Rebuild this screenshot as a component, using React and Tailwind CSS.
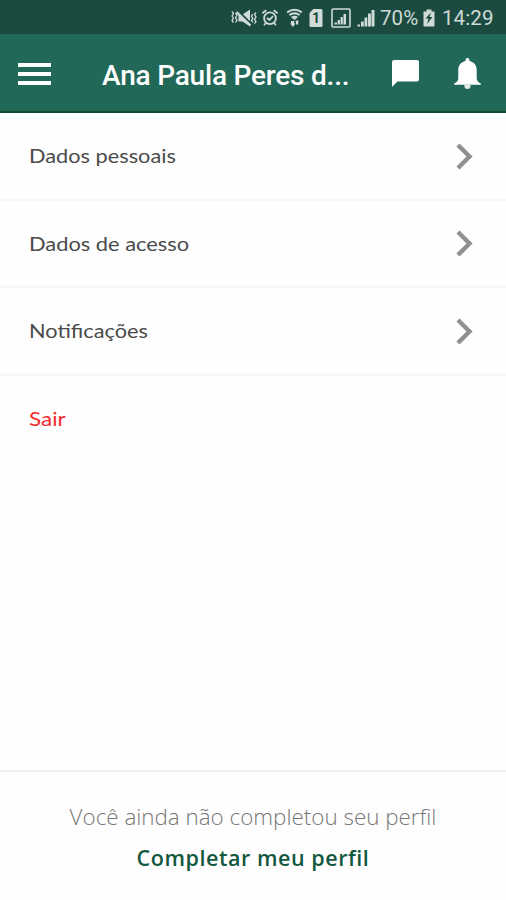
const menuItems = [
  { label: 'Dados pessoais', height: 'h-[88px]', stretch: 'scale-x-[1.145]' },
  { label: 'Dados de acesso', height: 'h-[87px]', stretch: 'scale-x-[1.15]' },
  { label: 'Notificações', height: 'h-[88px]', stretch: 'scale-x-[1.145]' },
  { label: 'Sair', height: 'h-[88px]', stretch: 'scale-x-[1.18]', danger: true },
];

function MuteVibrateIcon() {
  return (
    <svg width="26" height="20" viewBox="0 0 26 20" fill="none" stroke="currentColor">
      <path d="M1 3.500l1.500 2L1 8l1.500 2.200L1 12.500l1.500 2M4.500 5L6 7.300l-1.500 2.400L6 12l-1.500 2.500M25 4.500l-1.500 2L25 9l-1.500 2.500 1.500 2-1.500 2M21.800 6l-1.300 2 1.300 2.200-1.300 2.200 1.300 2" strokeWidth="1.300" />
      <path d="M7.500 6.500h4l7.500-5v17l-7.500-5h-4z" fill="currentColor" stroke="none" />
      <path d="M6.500 2.500L20 15.500" stroke="#1b4b40" strokeWidth="2" />
      <path d="M5.500 4L19.500 17.500" strokeWidth="2.200" />
    </svg>
  );
}

function AlarmIcon() {
  return (
    <svg width="18" height="20" viewBox="0 0 18 20" fill="none" stroke="currentColor" strokeWidth="1.800">
      <circle cx="9" cy="10.300" r="5.900" />
      <path d="M1.300 5.200l4-3M16.700 5.200l-4-3M4.800 15l-1.700 2.200M13.200 15l1.700 2.200" />
      <path d="M6 9.800l2.400 2.200 3.600-3.800" />
    </svg>
  );
}

function WifiIcon() {
  return (
    <svg width="17" height="20" viewBox="0 0 17 20" fill="none" stroke="currentColor">
      <path d="M1.200 4.300Q8.500-.7 15.800 4.300M3.400 7q5.100-3.600 10.200 0M5.700 9.600q2.800-1.900 5.600 0" strokeWidth="2" />
      <path d="M8.500 12.300L6.500 10h4z" fill="currentColor" stroke="none" />
      <path d="M5 13h3.200v2.500H9.500L7 19l-3-3.500h1zM10 16.500V14H9l2.200-2 2 2h-1v2.500z" fill="currentColor" stroke="none" />
    </svg>
  );
}

function SimIcon() {
  return (
    <svg width="14" height="20" viewBox="0 0 14 20">
      <path d="M4.300 1H12a1.500 1.500 0 011.500 1.500v15A1.500 1.500 0 0112 19H2a1.500 1.500 0 01-1.500-1.500V5z" fill="currentColor" />
      <text x="7" y="15" textAnchor="middle" fill="#1b4b40" className="font-['Roboto',sans-serif] text-[14px] font-bold">1</text>
    </svg>
  );
}

function BoxedSignalIcon() {
  return (
    <svg width="20" height="20" viewBox="0 0 20 20" fill="currentColor">
      <rect x="1" y="1" width="18" height="18" rx="1" fill="none" stroke="currentColor" strokeWidth="1.600" />
      <path d="M3.500 14.500H6v2H3.500zM6.700 12h2.200v4.500H6.700zM9.600 9h2.200v7.500H9.600zM12.500 6h2.500v10.500h-2.500z" />
    </svg>
  );
}

function SignalIcon() {
  return (
    <svg width="18" height="20" viewBox="0 0 18 20" fill="currentColor">
      <path d="M.5 16.500H3v2H.5zM4 13.500h2.800v5H4zM7.500 9.500h2.800v9H7.500zM11 5.500h2.900v13H11zM14.500 2h3v16.500h-3z" />
    </svg>
  );
}

function BatteryIcon() {
  return (
    <svg width="12" height="18" viewBox="0 0 12 18">
      <path d="M3.500.5h5v2h3v15H.5v-15h3z" fill="currentColor" />
      <path d="M8 3.500L2.500 9.500h3l-1.500 5.500 5.500-7H6.500z" fill="#1b4b40" />
    </svg>
  );
}

function StatusBar() {
  return (
    <div className="flex h-[34px] shrink-0 items-center bg-[#1b4b40] pt-[2px] pl-[231px] text-[#cfdbd7] font-['Roboto',sans-serif] text-[20.5px]">
      <MuteVibrateIcon />
      <span className="ml-[4px]"><AlarmIcon /></span>
      <span className="ml-[7px]"><WifiIcon /></span>
      <span className="ml-[6px]"><SimIcon /></span>
      <span className="ml-[8px]"><BoxedSignalIcon /></span>
      <span className="ml-[6px]"><SignalIcon /></span>
      <span className="ml-[5px] w-[39px] whitespace-nowrap tracking-[0.1px]">70%</span>
      <span className="ml-[4px]"><BatteryIcon /></span>
      <span className="ml-[7px] whitespace-nowrap tracking-[0.1px]">14:29</span>
    </div>
  );
}

function Header() {
  return (
    <header className="flex h-[79px] shrink-0 items-center border-b-2 border-[#124b32] bg-[#226859] pt-[2px] pl-[18px] text-white">
      <button aria-label="Menu" className="flex w-[33px] flex-col gap-[5px]">
        <span className="h-[4px] bg-white" />
        <span className="h-[4px] bg-white" />
        <span className="h-[4px] bg-white" />
      </button>
      <h1 className="ml-[51px] w-[248px] whitespace-nowrap pt-[4px] font-['Roboto',sans-serif] text-[28px] font-medium tracking-[-0.2px]">
        Ana Paula Peres d...
      </h1>
      <button aria-label="Mensagens" className="ml-[42px]">
        <svg width="27" height="27" viewBox="0 0 27 27" fill="white">
          <path d="M2 0h23a2 2 0 012 2v17.600a2 2 0 01-2 2H5.400L0 27V2a2 2 0 012-2z" />
        </svg>
      </button>
      <button aria-label="Alertas" className="ml-[35px]">
        <svg width="27" height="31" viewBox="0 0 27 31" fill="white">
          <path d="M13.500 0a2 2 0 012 2v1.100c4.500.9 7.200 4.400 7.200 9v8.200c0 2.200 1.300 3.900 4.100 5.200v1.200H.2v-1.200c2.800-1.300 4.100-3 4.100-5.200v-8.200c0-4.600 2.700-8.100 7.200-9V2a2 2 0 012-2z" />
          <path d="M10.400 26.700h6.200v1.300a3.100 3 0 01-6.200 0z" fill="#e3ebe9" />
        </svg>
      </button>
    </header>
  );
}

function MenuItem({ label, height, stretch, danger }) {
  return (
    <li className={`${height} flex items-center justify-between border-b-2 pl-[29px] pr-[33px] ${danger ? 'border-[#fcfcfc]' : 'border-[#f7f7f7]'}`}>
      <span className={`origin-left pt-px font-['Lato',sans-serif] text-[19px] ${stretch} ${danger ? 'text-[#f52a2a]' : 'text-[#4a4a4a]'}`}>{label}</span>
      {!danger && (
        <svg width="17" height="27" viewBox="0 0 17 27" fill="none" stroke="#909090" strokeWidth="4.400">
          <path d="M2 2l11.500 11.500L2 25" />
        </svg>
      )}
    </li>
  );
}

export default function App() {
  return (
    <div className="flex h-[900px] w-[506px] flex-col overflow-hidden bg-[#fefefe]">
      <StatusBar />
      <Header />
      <ul className="flex-1">
        {menuItems.map((item) => <MenuItem key={item.label} {...item} />)}
      </ul>
      <footer className="flex h-[130px] shrink-0 flex-col items-center border-t-2 border-[#eeeeee] pt-[30px] font-['Open_Sans',sans-serif]">
        <p className="text-[22.4px] leading-[30px] font-light text-[#777777]">Você ainda não completou seu perfil</p>
        <button className="mt-[11px] text-[21.5px] leading-[30px] font-semibold tracking-[0.55px] text-[#12583f]">Completar meu perfil</button>
      </footer>
    </div>
  );
}
